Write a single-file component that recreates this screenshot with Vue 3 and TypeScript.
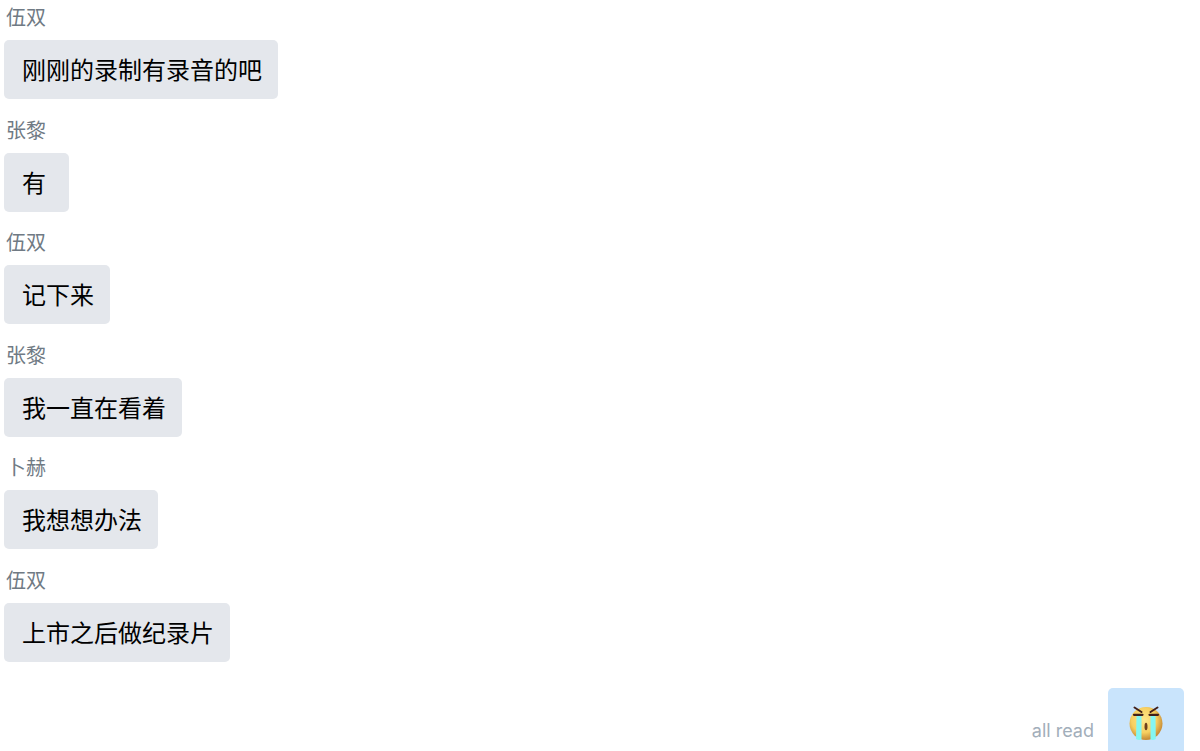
<script setup lang="ts">
interface Message {
  id: number
  sender: string
  text: string
}

const messages: Message[] = [
  { id: 1, sender: '伍双', text: '刚刚的录制有录音的吧' },
  { id: 2, sender: '张黎', text: '有' },
  { id: 3, sender: '伍双', text: '记下来' },
  { id: 4, sender: '张黎', text: '我一直在看着' },
  { id: 5, sender: '卜赫', text: '我想想办法' },
  { id: 6, sender: '伍双', text: '上市之后做纪录片' },
]
</script>

<template>
  <main class="chat">
    <ol class="incoming">
      <li v-for="m in messages" :key="m.id" class="message">
        <span class="sender">{{ m.sender }}</span>
        <p class="bubble">{{ m.text }}</p>
      </li>
    </ol>
    <div class="outgoing">
      <span class="status">all read</span>
      <div class="bubble own">
        <svg class="emoji" viewBox="0 0 36 38" role="img" aria-label="Crying">
          <defs>
            <radialGradient id="face" cx="44%" cy="40%" r="58%">
              <stop offset="0" stop-color="#ffe78c" />
              <stop offset="0.65" stop-color="#f7cf60" />
              <stop offset="1" stop-color="#c98f38" />
            </radialGradient>
          </defs>
          <circle cx="18" cy="19.5" r="16.5" fill="url(#face)" />
          <path d="M8.500 12H13.500V35.500Q10.500 36.500 8 35Z M22.500 12H27.500L27.800 35Q25 36.500 22.500 35.500Z" fill="#84f6f2" />
          <path d="M6.500 3.500L13.500 8M29.500 3.500L22.500 8" fill="none" stroke="#42201a" stroke-width="2" stroke-linecap="round" />
          <path d="M6 10.800H14.500M21.500 10.800H30" fill="none" stroke="#42201a" stroke-width="2.200" stroke-linecap="round" />
          <ellipse cx="18" cy="22.500" rx="1.500" ry="3.800" fill="#70401c" />
        </svg>
      </div>
    </div>
  </main>
</template>

<style>
body {
  margin: 0;
  background: #fff;
}
</style>

<style scoped>
.chat {
  box-sizing: border-box;
  min-height: 100vh;
  padding: 5px 16px 0 4px;
  font-family: "Liberation Sans", "Noto Sans CJK SC", sans-serif;
}

.incoming {
  display: grid;
  grid-auto-rows: 1fr;
  min-height: 675px;
  margin: 0;
  padding: 0;
  list-style: none;
}

.message {
  display: flex;
  flex-direction: column;
  align-items: flex-start;
}

.sender {
  padding-left: 2px;
  margin-bottom: 9px;
  color: #707a84;
  font-size: 20px;
  line-height: 26px;
}

.bubble {
  box-sizing: border-box;
  min-width: 65px;
  margin: 0;
  padding: 15px 16px 12px 18px;
  border-radius: 5px;
  background: #e4e7ec;
  color: #000;
  font-size: 24px;
  line-height: 32px;
}

.outgoing {
  display: flex;
  align-items: flex-end;
  justify-content: flex-end;
  gap: 14px;
  padding-top: 8px;
}

.status {
  margin-bottom: 8px;
  color: #a2aeba;
  font-family: Inter, sans-serif;
  font-size: 18px;
  line-height: 24px;
}

.own {
  display: flex;
  padding: 16px 20px 9px;
  border-radius: 5px 5px 0 0;
  background: #c9e4fc;
}

.emoji {
  display: block;
  width: 36px;
  height: 38px;
}
</style>
